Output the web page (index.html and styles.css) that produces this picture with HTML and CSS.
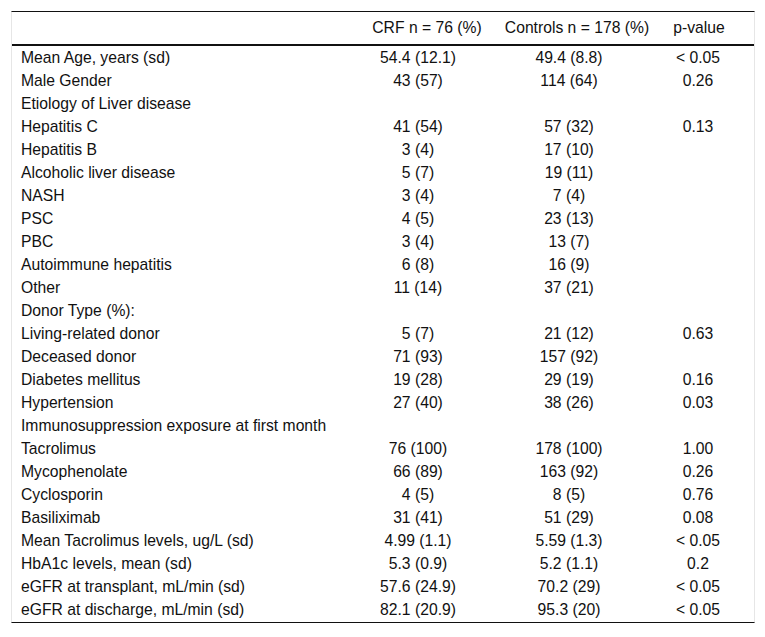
FILE: index.html
```html
<!DOCTYPE html>
<html>
<head>
<meta charset="utf-8">
<link rel="stylesheet" href="styles.css">
</head>
<body>
<div class="page">
  <div class="tbl-wrap">
    <table class="tbl">
      <colgroup>
        <col class="w-label">
        <col class="w-crf">
        <col class="w-ctrl">
        <col class="w-p">
      </colgroup>
      <thead>
        <tr>
          <th></th>
          <th class="h1">CRF n = 76 (%)</th>
          <th class="h2">Controls n = 178 (%)</th>
          <th class="h3">p-value</th>
        </tr>
      </thead>
      <tbody>
        <tr><td class="lab">Mean Age, years (sd)</td><td class="c1">54.4 (12.1)</td><td class="c2">49.4 (8.8)</td><td class="c3">&lt; 0.05</td></tr>
        <tr><td class="lab">Male Gender</td><td class="c1">43 (57)</td><td class="c2">114 (64)</td><td class="c3">0.26</td></tr>
        <tr><td class="lab">Etiology of Liver disease</td><td class="c1"></td><td class="c2"></td><td class="c3"></td></tr>
        <tr><td class="lab">Hepatitis C</td><td class="c1">41 (54)</td><td class="c2">57 (32)</td><td class="c3">0.13</td></tr>
        <tr><td class="lab">Hepatitis B</td><td class="c1">3 (4)</td><td class="c2">17 (10)</td><td class="c3"></td></tr>
        <tr><td class="lab">Alcoholic liver disease</td><td class="c1">5 (7)</td><td class="c2">19 (11)</td><td class="c3"></td></tr>
        <tr><td class="lab">NASH</td><td class="c1">3 (4)</td><td class="c2">7 (4)</td><td class="c3"></td></tr>
        <tr><td class="lab">PSC</td><td class="c1">4 (5)</td><td class="c2">23 (13)</td><td class="c3"></td></tr>
        <tr><td class="lab">PBC</td><td class="c1">3 (4)</td><td class="c2">13 (7)</td><td class="c3"></td></tr>
        <tr><td class="lab">Autoimmune hepatitis</td><td class="c1">6 (8)</td><td class="c2">16 (9)</td><td class="c3"></td></tr>
        <tr><td class="lab">Other</td><td class="c1">11 (14)</td><td class="c2">37 (21)</td><td class="c3"></td></tr>
        <tr><td class="lab">Donor Type (%):</td><td class="c1"></td><td class="c2"></td><td class="c3"></td></tr>
        <tr><td class="lab">Living-related donor</td><td class="c1">5 (7)</td><td class="c2">21 (12)</td><td class="c3">0.63</td></tr>
        <tr><td class="lab">Deceased donor</td><td class="c1">71 (93)</td><td class="c2">157 (92)</td><td class="c3"></td></tr>
        <tr><td class="lab">Diabetes mellitus</td><td class="c1">19 (28)</td><td class="c2">29 (19)</td><td class="c3">0.16</td></tr>
        <tr><td class="lab">Hypertension</td><td class="c1">27 (40)</td><td class="c2">38 (26)</td><td class="c3">0.03</td></tr>
        <tr><td class="lab">Immunosuppression exposure at first month</td><td class="c1"></td><td class="c2"></td><td class="c3"></td></tr>
        <tr><td class="lab">Tacrolimus</td><td class="c1">76 (100)</td><td class="c2">178 (100)</td><td class="c3">1.00</td></tr>
        <tr><td class="lab">Mycophenolate</td><td class="c1">66 (89)</td><td class="c2">163 (92)</td><td class="c3">0.26</td></tr>
        <tr><td class="lab">Cyclosporin</td><td class="c1">4 (5)</td><td class="c2">8 (5)</td><td class="c3">0.76</td></tr>
        <tr><td class="lab">Basiliximab</td><td class="c1">31 (41)</td><td class="c2">51 (29)</td><td class="c3">0.08</td></tr>
        <tr><td class="lab">Mean Tacrolimus levels, ug/L (sd)</td><td class="c1">4.99 (1.1)</td><td class="c2">5.59 (1.3)</td><td class="c3">&lt; 0.05</td></tr>
        <tr><td class="lab">HbA1c levels, mean (sd)</td><td class="c1">5.3 (0.9)</td><td class="c2">5.2 (1.1)</td><td class="c3">0.2</td></tr>
        <tr><td class="lab">eGFR at transplant, mL/min (sd)</td><td class="c1">57.6 (24.9)</td><td class="c2">70.2 (29)</td><td class="c3">&lt; 0.05</td></tr>
        <tr><td class="lab">eGFR at discharge, mL/min (sd)</td><td class="c1">82.1 (20.9)</td><td class="c2">95.3 (20)</td><td class="c3">&lt; 0.05</td></tr>
      </tbody>
    </table>
  </div>
</div>
</body>
</html>
```

FILE: styles.css
```css
html, body {
  margin: 0;
  padding: 0;
  background: #ffffff;
}

.page {
  padding: 11px 10px 0 11px;
  font-family: "Liberation Sans", Arial, sans-serif;
  font-size: 15.7px;
  color: #111;
}

.tbl-wrap {
  width: 742px;
  border-top: 1px solid #111;
  border-bottom: 1px solid #111;
  border-left: 1px solid #e6e6e6;
  border-right: 1px solid #e6e6e6;
  padding-bottom: 1px;
}

.tbl {
  width: 742px;
  table-layout: fixed;
  border-collapse: collapse;
  border-spacing: 0;
}

.w-label { width: 338px; }
.w-crf { width: 152px; }
.w-ctrl { width: 158px; }
.w-p { width: 94px; }

.tbl th {
  height: 32px;
  padding: 0;
  font-weight: normal;
  text-align: center;
  white-space: nowrap;
  border-bottom: 2px solid #111;
  line-height: 32px;
}

.tbl th.h1 { padding-left: 2px; }
.tbl th.h2 { padding-right: 8px; }
.tbl th.h3 { padding-right: 16px; }

.tbl td {
  height: 23px;
  padding: 0;
  line-height: 23px;
  white-space: nowrap;
  text-align: center;
}

.tbl td.lab {
  text-align: left;
  padding-left: 9px;
}

.tbl td.c1 { padding-right: 16px; }
.tbl td.c2 { padding-right: 24px; }
.tbl td.c3 { padding-right: 18px; }
```
